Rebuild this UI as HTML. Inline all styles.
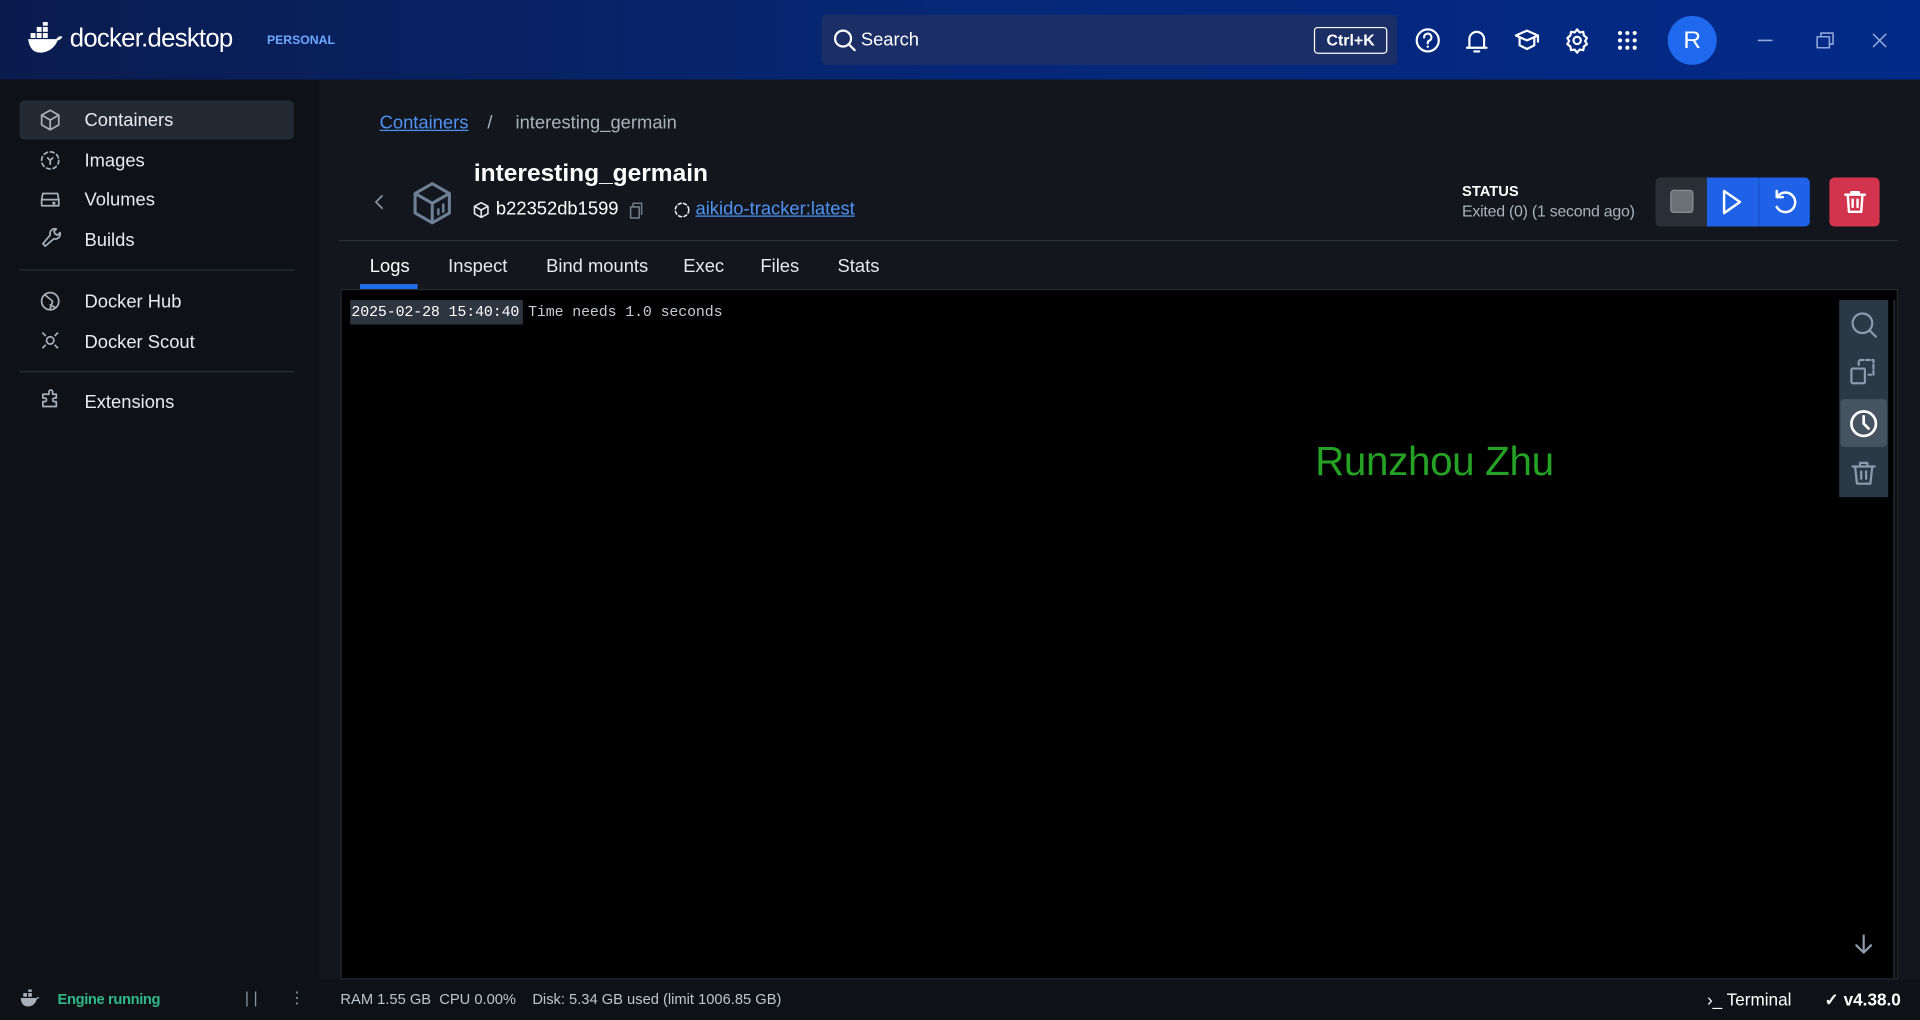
<!DOCTYPE html>
<html><head><meta charset="utf-8"><style>
*{box-sizing:border-box;margin:0;padding:0}
html,body{width:1920px;height:1020px;overflow:hidden;background:#0e1217}
#w{position:absolute;left:0;top:0;width:1568px;height:833px;transform:scale(1.22449);transform-origin:0 0;font-family:"Liberation Sans",sans-serif;color:#e6e9ed}
.a{position:absolute}
svg{position:absolute;fill:none;stroke-linecap:round;stroke-linejoin:round}
.hdr{left:0;top:0;width:1568px;height:65px;background:linear-gradient(90deg,#0a1c4e 0%,#062777 50%,#022a88 100%)}
.side{left:0;top:65px;width:261px;height:735px;background:#0e1217}
.main{left:261px;top:65px;width:1307px;height:735px;background:#13171d}
.nav{position:absolute;left:69px;font-size:15px;color:#e8ebee}
.foot{left:0;top:800px;width:1568px;height:33px;background:#0e1217;font-size:12px}
</style></head><body><div id="w">
<div class="a hdr"></div>
<svg style="left:22px;top:18px" width="30" height="28" viewBox="0 0 30 28"><g fill="#fff" stroke="none"><rect x="3" y="9" width="4" height="4"/><rect x="8" y="9" width="4" height="4"/><rect x="13" y="9" width="4" height="4"/><rect x="8" y="4" width="4" height="4"/><rect x="13" y="4" width="4" height="4"/><rect x="13" y="0" width="4" height="3"/><path d="M1 14h23c1-2 3-3 5-2-1 2-3 3-4 3-2 6-8 10-14 10-6 0-9-4-10-11z"/></g></svg>
<div class="a" style="left:57px;top:20px;font-size:21px;color:#fff;letter-spacing:-0.6px">docker.desktop</div>
<div class="a" style="left:218px;top:28px;font-size:10px;font-weight:bold;color:#6ea8ff">PERSONAL</div>
<div class="a" style="left:671px;top:12px;width:470px;height:41px;background:#1b2f66;border-radius:4px"></div>
<svg style="left:680px;top:23px" width="20" height="20" viewBox="0 0 20 20" stroke="#fff" stroke-width="1.8"><circle cx="8.5" cy="8.5" r="6.5"/><path d="M13 13l5 5"/></svg>
<div class="a" style="left:703px;top:24px;font-size:15px;color:#fff">Search</div>
<div class="a" style="left:1073px;top:22px;width:60px;height:22px;border:1.5px solid #fff;border-radius:3px;font-size:13px;font-weight:bold;color:#fff;text-align:center;line-height:19px">Ctrl+K</div>
<svg style="left:1154px;top:22px" width="230" height="24" viewBox="0 0 230 24" stroke="#fff" stroke-width="1.8">
<circle cx="12" cy="11" r="9"/><path d="M9 8.5a3 3 0 1 1 4 2.8c-1 .4-1 1-1 2M12 16v.2"/>
<path d="M46 17V10a6 6 0 0 1 12 0v7zM44 17h16M50 20h4"/>
<path d="M84 7l9-4 9 4-9 4zM87 9v6l6 3 6-3V9M102 7v5"/>
<circle cx="134" cy="11" r="3"/><path d="M134 2l2 2.5 3-.5.5 3 2.5 2-1.5 2.5 1.5 2.5-2.5 2-.5 3-3-.5-2 2.5-2-2.5-3 .5-.5-3-2.5-2 1.5-2.5-1.5-2.5 2.5-2 .5-3 3 .5z"/>
<g fill="#fff" stroke="none"><circle cx="169" cy="5" r="1.7"/><circle cx="175" cy="5" r="1.7"/><circle cx="181" cy="5" r="1.7"/><circle cx="169" cy="11" r="1.7"/><circle cx="175" cy="11" r="1.7"/><circle cx="181" cy="11" r="1.7"/><circle cx="169" cy="17" r="1.7"/><circle cx="175" cy="17" r="1.7"/><circle cx="181" cy="17" r="1.7"/></g></svg>
<div class="a" style="left:1362px;top:13px;width:40px;height:40px;border-radius:50%;background:#1f69ee;color:#fff;font-size:20px;text-align:center;line-height:40px">R</div>
<svg style="left:1430px;top:22px" width="120" height="22" viewBox="0 0 120 22" stroke="#8fa6d6" stroke-width="1.3"><path d="M6 11h11"/><rect x="54" y="8" width="10" height="9"/><path d="M57 8V5h10v9h-3"/><path d="M100 6l10 10M110 6l-10 10"/></svg>

<div class="a side"></div>
<div class="a main"></div>
<div class="a" style="left:16px;top:82px;width:224px;height:32px;background:#242a33;border-radius:4px"></div>
<svg style="left:31px;top:88px" width="20" height="250" viewBox="0 0 20 250" stroke="#a8b0ba" stroke-width="1.4">
<path d="M10 2l7 4v8l-7 4-7-4V6zM3 6l7 4 7-4M10 10v8"/>
<circle cx="10" cy="43" r="7" stroke-dasharray="3 2.5"/><path d="M8 41l2 2 2-2M10 43v3"/>
<path d="M4 70h12l1 5v5H3v-5zM3 75h14"/><circle cx="13" cy="78" r=".6"/>
<path d="M15 99a4 4 0 0 0-5 5l-6 7 2 2 7-6a4 4 0 0 0 5-5l-2 2-2-1-1-2z"/>
<circle cx="10" cy="158" r="7"/><path d="M6 153l6 5-2 6M14 163l-4-2"/>
<circle cx="10" cy="190" r="3"/><path d="M4 184l2 2M16 184l-2 2M4 196l2-2M16 196l-2-2"/>
<path d="M6 234h3v-2a1.5 1.5 0 0 1 3 0v2h3v3h-1.5a1.5 1.5 0 0 0 0 3H15v4H4v-4h1.5a1.5 1.5 0 0 0 0-3H4v-3z"/></svg>
<div class="nav" style="top:90px">Containers</div>
<div class="nav" style="top:123px">Images</div>
<div class="nav" style="top:155px">Volumes</div>
<div class="nav" style="top:188px">Builds</div>
<div class="a" style="left:16px;top:220px;width:224px;height:1px;background:#2a3038"></div>
<div class="nav" style="top:238px">Docker Hub</div>
<div class="nav" style="top:271px">Docker Scout</div>
<div class="a" style="left:16px;top:303px;width:224px;height:1px;background:#2a3038"></div>
<div class="nav" style="top:320px">Extensions</div>

<div class="a" style="left:310px;top:92px;font-size:15px;color:#4d93f5;text-decoration:underline">Containers</div>
<div class="a" style="left:398px;top:92px;font-size:15px;color:#a9b1bb">/</div>
<div class="a" style="left:421px;top:92px;font-size:15px;color:#a9b1bb">interesting_germain</div>
<svg style="left:302px;top:156px" width="16" height="18" viewBox="0 0 16 18" stroke="#8a94a0" stroke-width="1.4"><path d="M10 4l-5 5 5 5"/></svg>
<svg style="left:335px;top:147px" width="36" height="38" viewBox="0 0 36 38" stroke="#6d8096" stroke-width="2.5"><path d="M18 3l14 8v16l-14 8-14-8V11zM4 11l14 8 14-8M18 19v16"/><path d="M23 28v-4M27 26v-6" stroke-width="2"/></svg>
<div class="a" style="left:387px;top:131px;font-size:20px;font-weight:bold;color:#fff">interesting_germain</div>
<svg style="left:386px;top:164px" width="320" height="16" viewBox="0 0 320 16" stroke="#e6e9ed" stroke-width="1.3"><path d="M7 1.5l5.5 3v6L7 13.5 1.5 10.5v-6zM1.5 4.5L7 7.5l5.5-3M7 7.5v6"/>
<path d="M129 5h7v9h-7zM131 5V2h7v9" stroke="#6f7884"/>
<circle cx="171" cy="7.5" r="5.5" stroke-dasharray="2.5 2"/></svg>
<div class="a" style="left:405px;top:162px;font-size:15px;color:#fff">b22352db1599</div>
<div class="a" style="left:568px;top:162px;font-size:15px;color:#4d93f5;text-decoration:underline">aikido-tracker:latest</div>
<div class="a" style="left:1194px;top:149px;font-size:12px;font-weight:bold;color:#fff">STATUS</div>
<div class="a" style="left:1194px;top:165px;font-size:13px;color:#a9b1bb;letter-spacing:-0.2px">Exited (0) (1 second ago)</div>
<div class="a" style="left:1352px;top:145px;width:42px;height:40px;background:#2a2f37;border-radius:4px 0 0 4px"></div>
<div class="a" style="left:1364px;top:155px;width:19px;height:19px;background:#6b7077;border:1.5px solid #8b9097;border-radius:3px"></div>
<div class="a" style="left:1394px;top:145px;width:84px;height:40px;background:#1f62e8;border-radius:0 4px 4px 0"></div>
<div class="a" style="left:1436px;top:145px;width:1px;height:40px;background:#1750c2"></div>
<svg style="left:1400px;top:150px" width="75" height="30" viewBox="0 0 75 30" stroke="#fff" stroke-width="2"><path d="M8 6l13 9-13 9z"/><path d="M52 10a8 8 0 1 1-1 9M51 6v5h5"/></svg>
<div class="a" style="left:1494px;top:145px;width:41px;height:40px;background:#d2334d;border-radius:4px"></div>
<svg style="left:1503px;top:153px" width="24" height="24" viewBox="0 0 24 24" stroke="#fff" stroke-width="2"><path d="M4 6h16M9 6V4h6v2M6 6l1 14h10l1-14M10 10v6M14 10v6"/></svg>
<div class="a" style="left:277px;top:196px;width:1273px;height:1px;background:#2a3038"></div>
<div class="a" style="left:302px;top:209px;font-size:15px;color:#fff">Logs</div>
<div class="a" style="left:366px;top:209px;font-size:15px;color:#e6e9ed">Inspect</div>
<div class="a" style="left:446px;top:209px;font-size:15px;color:#e6e9ed">Bind mounts</div>
<div class="a" style="left:558px;top:209px;font-size:15px;color:#e6e9ed">Exec</div>
<div class="a" style="left:621px;top:209px;font-size:15px;color:#e6e9ed">Files</div>
<div class="a" style="left:684px;top:209px;font-size:15px;color:#e6e9ed">Stats</div>
<div class="a" style="left:294px;top:232px;width:47px;height:4px;background:#1f6feb"></div>
<div class="a" style="left:278px;top:236px;width:1272px;height:564px;background:#000;border:1px solid #262b32"></div>
<div class="a" style="left:286px;top:245px;width:141px;height:20px;background:#2d3540"></div>
<div class="a" style="left:287px;top:248px;font-family:'Liberation Mono',monospace;font-size:12.2px;color:#fff;white-space:pre;letter-spacing:-0.1px">2025-02-28 15:40:40 <span style="color:#c8ccd1">Time needs 1.0 seconds</span></div>
<div class="a" style="left:1074px;top:358px;font-size:33px;color:#25a225;font-family:'Liberation Sans',sans-serif;letter-spacing:-0.3px">Runzhou Zhu</div>
<div class="a" style="left:1502px;top:245px;width:40px;height:161px;background:#2b3947"></div>
<div class="a" style="left:1503px;top:326px;width:38px;height:39px;background:#465461;border-radius:3px"></div>
<svg style="left:1508px;top:250px" width="30" height="150" viewBox="0 0 30 150" stroke="#8b9bab" stroke-width="1.8"><circle cx="13" cy="14" r="8"/><path d="M19 20l5 5"/>
<rect x="4" y="51" width="11" height="12" rx="1"/><path d="M10 48v-4h12v12h-4" stroke-dasharray="3 2"/>
<circle cx="14" cy="96" r="10" stroke="#fff" stroke-width="2.2"/><path d="M14 90v6l4 4" stroke="#fff" stroke-width="2.2"/>
<path d="M5 131h18M11 131v-3h6v3M7 131l1.5 14h11L21 131M12 135v6M16 135v6"/></svg>
<div class="a" style="left:1546px;top:245px;width:2px;height:554px;background:#1d2229"></div>
<svg style="left:1512px;top:761px" width="20" height="20" viewBox="0 0 20 20" stroke="#8b9bab" stroke-width="1.8"><path d="M10 3v14M4 11l6 6 6-6"/></svg>

<div class="a foot"></div>
<svg style="left:16px;top:808px" width="16" height="16" viewBox="0 0 16 16"><g fill="#a8b0ba"><rect x="3" y="3" width="3" height="3"/><rect x="7" y="3" width="3" height="3"/><rect x="7" y="0" width="3" height="2"/><path d="M1 7h13c1-1 2-1 2 0l-2 1c-1 4-4 6-7 6-4 0-6-3-6-7z"/></g></svg>
<div class="a" style="left:47px;top:809px;font-size:12px;font-weight:bold;color:#2fb986;letter-spacing:-0.3px">Engine running</div>
<div class="a" style="left:200px;top:807px;font-size:13px;color:#8b939c">| |</div>
<div class="a" style="left:236px;top:807px;font-size:13px;color:#8b939c">⋮</div>
<div class="a" style="left:278px;top:809px;font-size:12px;color:#bfc5cc;white-space:pre">RAM 1.55 GB  CPU 0.00%    Disk: 5.34 GB used (limit 1006.85 GB)</div>
<div class="a" style="left:1394px;top:808px;font-size:14px;color:#fff">›_ Terminal</div>
<div class="a" style="left:1490px;top:808px;font-size:14px;font-weight:bold;color:#fff">✓ v4.38.0</div>
</div></body></html>
